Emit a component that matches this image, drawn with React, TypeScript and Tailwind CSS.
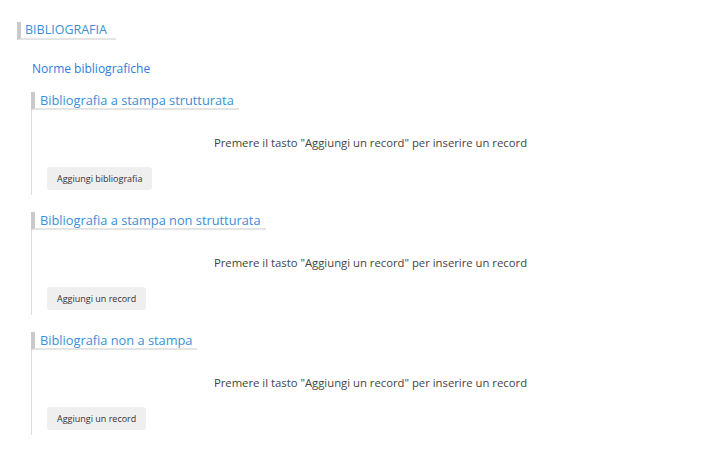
const sections = [
  { title: "Bibliografia a stampa strutturata", button: "Aggiungi bibliografia" },
  { title: "Bibliografia a stampa non strutturata", button: "Aggiungi un record" },
  { title: "Bibliografia non a stampa", button: "Aggiungi un record" },
];

const Section = ({ title, button }: { title: string; button: string }) => (
  <div className="ml-[14px] border-l border-[#dddddd] pb-[5px]">
    {/* Section title */}
    <h3 className="-ml-px w-fit border-l-4 border-b-2 border-l-[#cacaca] border-b-[#e4e4e4] pl-[5px] pr-[5px] text-[12.8px] leading-[16px] text-[#3d8ed6]">
      {title}
    </h3>
    <p className="mt-[25px] text-center text-[11.3px] leading-[16px] text-[#444444]">
      Premere il tasto "Aggiungi un record" per inserire un record
    </p>
    <div className="mt-[16px] flex pl-[15px]">
      <button className="h-[23px] rounded-[3px] bg-[#efefef] px-[10px] text-[9px] leading-[23px] text-[#333333]">
        {button}
      </button>
    </div>
  </div>
);

export default function App() {
  return (
    <div
      className="min-h-[458px] w-full bg-white px-[17px] pt-[22px]"
      style={{ fontFamily: '"Open Sans", "Liberation Sans", sans-serif' }}
    >
      {/* Main heading */}
      <h2 className="w-fit border-l-4 border-b-2 border-l-[#cacaca] border-b-[#e4e4e4] pl-[4px] pr-[9px] text-[12.5px] leading-[16px] text-[#3d8ed6]">
        BIBLIOGRAFIA
      </h2>

      <div className="mt-[21px] flex pl-[15px]">
        <a href="#" className="block text-[12px] leading-[16px] text-[#2c7de0]">
          Norme bibliografiche
        </a>
      </div>

      <div className="mt-[15px] flex flex-col gap-[17px]">
        {sections.map((s) => (
          <Section key={s.title} title={s.title} button={s.button} />
        ))}
      </div>
    </div>
  );
}
